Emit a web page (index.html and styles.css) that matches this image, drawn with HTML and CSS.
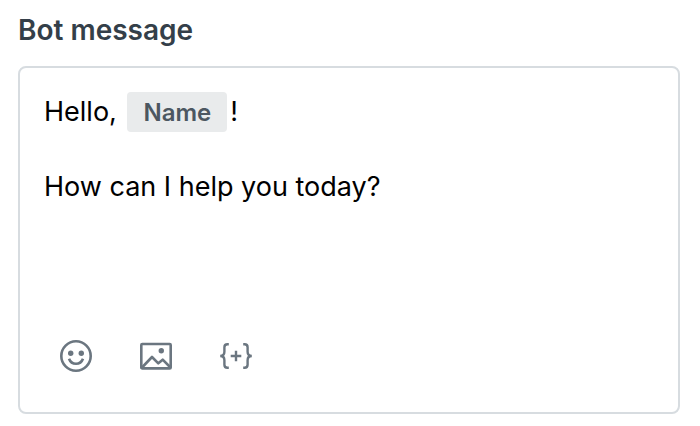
FILE: index.html
```
<!DOCTYPE html>
<html lang="en">
<head>
    <meta charset="UTF-8">
    <meta name="viewport" content="width=device-width, initial-scale=1.0">
    <title>Bot message</title>
    <link rel="stylesheet" href="styles.css">
</head>
<body>
    <div class="field">
        <h1 class="field-label" id="message-label">Bot message</h1>

        <div class="editor">
            <div class="editor-text" contenteditable="true" role="textbox" aria-multiline="true" aria-labelledby="message-label" spellcheck="false">
                <p>Hello, <span class="variable" contenteditable="false">Name</span>!</p>
                <p>How can I help you today?</p>
            </div>

            <!-- Toolbar -->
            <div class="toolbar">
                <button type="button" aria-label="Insert emoji">
                    <svg viewBox="0 0 32 32" fill="none" stroke="currentColor">
                        <circle cx="16" cy="16" r="14.7" stroke-width="2.6"/>
                        <circle cx="10.7" cy="13.3" r="2.7" fill="currentColor" stroke="none"/>
                        <circle cx="21.3" cy="13.3" r="2.7" fill="currentColor" stroke="none"/>
                        <path d="M9 18.7C10.2 21.9 12.8 23.7 16 23.7s5.800-1.800 7-5" stroke-width="2.6"/>
                    </svg>
                </button>
                <button type="button" aria-label="Insert image">
                    <svg viewBox="0 0 32 32" fill="none" stroke="currentColor" stroke-width="2.6" stroke-linejoin="round">
                        <rect x="1.3" y="4" width="29.4" height="24.4" rx="1"/>
                        <circle cx="21.3" cy="10.7" r="2.7" fill="currentColor" stroke="none"/>
                        <path d="M2 27.5l10-10.500 6.300 6.300 4.400-3.600 7.300 7.300"/>
                    </svg>
                </button>
                <button type="button" aria-label="Insert variable">
                    <svg viewBox="0 0 32 32" fill="none" stroke="currentColor" stroke-width="2.4">
                        <path d="M8.800 4.200H7.400C5.200 4.200 4.400 5.300 4.400 7.200v4.600c0 2.400-1.300 4.200-4.200 4.200 2.900 0 4.200 1.800 4.200 4.200v4.600c0 1.900.8 3 3 3h1.400"/>
                        <path d="M23.200 4.200h1.400c2.200 0 3 1.100 3 3v4.600c0 2.400 1.300 4.200 4.200 4.200-2.900 0-4.200 1.800-4.200 4.200v4.600c0 1.900-.8 3-3 3h-1.400"/>
                        <path d="M16 10.700v10.600M10.700 16h10.600"/>
                    </svg>
                </button>
            </div>
        </div>
    </div>
</body>
</html>
```
FILE: styles.css
```
:root {
    --label-color: #343f49;
    --icon-color: #6b7680;
    --border-color: #d7dce0;
    --chip-color: #e9ebec;
}

* {
    box-sizing: border-box;
    margin: 0;
    padding: 0;
}

body {
    font-family: Inter, "Liberation Sans", sans-serif;
    background-color: white;
    padding: 12px 20px 12px 18px;
}

.field {
    display: flex;
    flex-direction: column;
    gap: 18px;
}

.field-label {
    color: var(--label-color);
    font-size: 28px;
    font-weight: 600;
    line-height: 36px;
}

.editor {
    border: 2px solid var(--border-color);
    border-radius: 8px;
    padding: 24px;
}

.editor-text {
    min-height: 232px;
    color: black;
    font-size: 27px;
    line-height: 40px;
    outline: none;
}

.editor-text p + p {
    margin-top: 35px;
}

.variable {
    display: inline-block;
    margin: 0 3px;
    padding: 1px 16px 0;
    border-radius: 4px;
    background-color: var(--chip-color);
    color: #4c5761;
    font-size: 24px;
    font-weight: 600;
    line-height: 39px;
    vertical-align: top;
}

.toolbar {
    display: flex;
    gap: 32px;
    padding: 8px;
}

.toolbar button {
    display: flex;
    padding: 8px;
    border: none;
    background: none;
    color: var(--icon-color);
    cursor: pointer;
}

.toolbar svg {
    width: 32px;
    height: 32px;
}
```
